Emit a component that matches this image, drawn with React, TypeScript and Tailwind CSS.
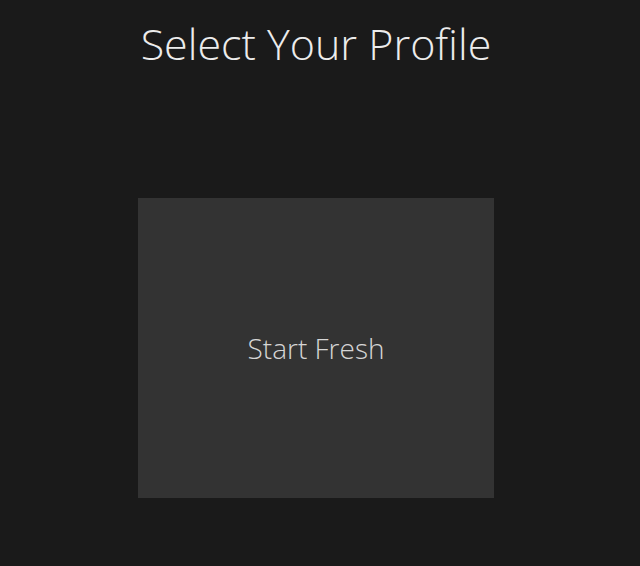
import React from "react";

const App = () => {
  return (
    <div className="w-full min-h-[566px] bg-[#1a1a1a] flex flex-col items-center pr-2 font-['Open_Sans',sans-serif]">
      <h1 className="mt-[15px] text-[43px] leading-[58px] font-light text-[#ececec]">
        Select Your Profile
      </h1>
      <div className="mt-[125px] w-[356px] h-[300px] bg-[#333333] flex items-center justify-center">
        <p className="text-[28px] font-light text-[#d6d6d6]">Start Fresh</p>
      </div>
    </div>
  );
};

export default App;
